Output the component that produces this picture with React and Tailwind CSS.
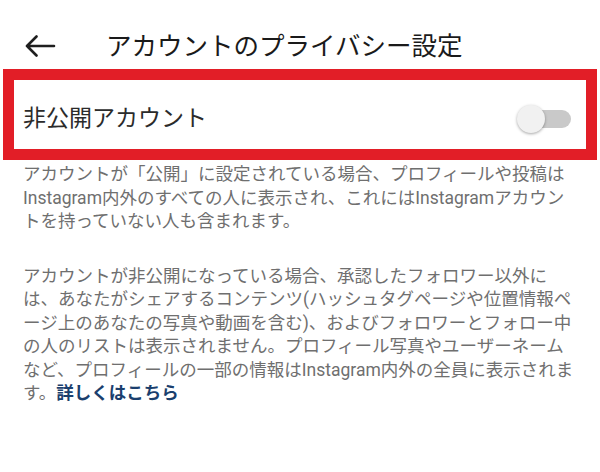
const font = { fontFamily: 'Roboto, "Noto Sans CJK JP", sans-serif' };

const BackArrow = () => (
  <svg width="32" height="22" viewBox="0 0 32 22" fill="none">
    <path
      d="M30 11H3M12.5 1.5L3 11l9.5 9.5"
      stroke="#1f1f1f"
      strokeWidth="2.6"
      strokeLinecap="round"
      strokeLinejoin="round"
    />
  </svg>
);

const Toggle = () => (
  <div className="relative h-[28px] w-[56px]">
    <div className="absolute right-0 top-[5px] h-[18px] w-[45px] rounded-full bg-[#c9c9c9]" />
    <div className="absolute left-[2px] top-0 h-[28px] w-[28px] rounded-full bg-[#f1f1f1] shadow-[0_1px_3px_rgba(0,0,0,0.35)]" />
  </div>
);

export default function App() {
  return (
    <div className="h-[472px] w-[600px] bg-white" style={font}>
      {/* header */}
      <div className="flex h-[69px] items-start pt-[30px]">
        <div className="ml-[24px] flex h-[32px] items-center">
          <BackArrow />
        </div>
        <div className="ml-[50px] h-[32px] text-[25.5px] leading-[32px] text-[#1a1a1a]">
          アカウントのプライバシー設定
        </div>
      </div>

      {/* highlighted row */}
      <div className="mx-[3px] h-[91px] w-[594px] border-[11px] border-[#e21e27]">
        <div className="flex h-full items-center pl-[9px] pr-[15px] pt-[9px]">
          <div className="flex-1 text-[23px] leading-[30px] text-[#2b2b2b]">
            非公開アカウント
          </div>
          <Toggle />
        </div>
      </div>

      {/* description */}
      <div className="px-[23px] pt-[3px] text-[17.5px] leading-[23.5px] whitespace-nowrap text-[#6f6f6f]">
        <p>
          アカウントが「公開」に設定されている場合、プロフィールや投稿は
          <br />
          Instagram内外のすべての人に表示され、これにはInstagramアカウン
          <br />
          トを持っていない人も含まれます。
        </p>
        <p className="mt-[31px]">
          アカウントが非公開になっている場合、承認したフォロワー以外に
          <br />
          は、あなたがシェアするコンテンツ(ハッシュタグページや位置情報ペ
          <br />
          ージ上のあなたの写真や動画を含む)、およびフォロワーとフォロー中
          <br />
          の人のリストは表示されません。プロフィール写真やユーザーネーム
          <br />
          など、プロフィールの一部の情報はInstagram内外の全員に表示されま
          <br />
          す。<span className="font-bold text-[#1b3f6e]">詳しくはこちら</span>
        </p>
      </div>
    </div>
  );
}
